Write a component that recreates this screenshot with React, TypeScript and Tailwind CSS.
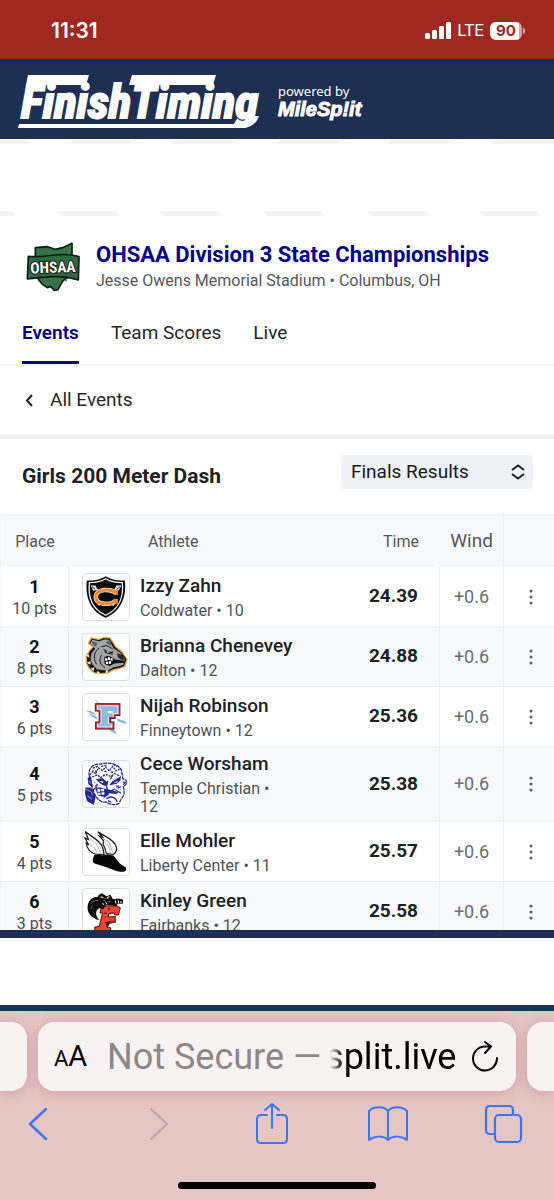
import type { ReactNode } from "react";

type Result = {
  place: number;
  points: number;
  name: string;
  school: string;
  grade: number;
  time: string;
  wind: string;
  logo: ReactNode;
};

function ColdwaterLogo() {
  return (
    <svg viewBox="0 0 144 144" className="w-full h-full" aria-hidden="true">
      <path d="M71 7C57 17 34 21 12 20C7 62 16 113 71 137C126 113 136 62 131 20C108 21 85 17 71 7Z" fill="#0b0b0b" />
      <path d="M71 15C56 24 38 27 20 27C16 64 24 108 71 129C118 108 127 64 123 27C104 27 86 24 71 15Z" fill="none" stroke="#fff" strokeWidth="4" />
      <path d="M30 38L50 54M112 38L94 54M48 98L58 92M96 98L86 92" stroke="#e8edf5" strokeWidth="5" />
      <path d="M24 36L40 36L45 50L32 52Z M120 36L104 36L99 50L112 52Z" fill="#dfe6f2" />
      <path d="M28 40l10 7M116 40l-10 7" stroke="#27344f" strokeWidth="3" />
      <path d="M104 61C88 44 40 46 40 72C40 98 88 99 104 82" fill="none" stroke="#fff" strokeWidth="14" />
      <path d="M104 61C88 44 40 46 40 72C40 98 88 99 104 82" fill="none" stroke="#ee8a35" strokeWidth="10" />
      <path d="M102 48H109V66H100L96 60ZM100 78H109V95H102L96 84Z" fill="#ee8a35" />
    </svg>
  );
}

function DaltonLogo() {
  return (
    <svg viewBox="0 0 144 144" className="w-full h-full" aria-hidden="true">
      <path d="M17 29L26 12L49 17L66 11L84 12L91 22L102 40L122 56L138 80L130 102L114 108L94 112L80 121L55 124L36 122L20 108L11 92L10 70L22 50L31 41Z" fill="#171719" stroke="#efa13b" strokeWidth="4" strokeLinejoin="round" />
      <path d="M22 29L30 18L50 23L68 17L82 18L88 30L96 45L117 59L131 78L126 96L112 101L95 104L76 116L50 117L32 104L23 84L26 62L38 45Z" fill="#a3a4a6" />
      <path d="M26 23L45 27L41 40L32 35ZM76 20L88 23L87 37L73 29Z" fill="#5e5f62" />
      <path d="M50 44C32 57 32 80 42 94M58 66C48 82 54 98 68 105M58 40L74 36L92 46M68 56L92 64" fill="none" stroke="#18191b" strokeWidth="3" strokeLinecap="round" />
      <path d="M62 46L84 56L96 54L92 61L76 61Z" fill="#18191b" />
      <path d="M72 52L84 58L77 59Z" fill="#fff" />
      <path d="M106 60L127 66L135 78L122 82L110 74Z" fill="#26272a" />
      <path d="M66 74C76 64 90 70 100 80L130 84L128 90L98 92L84 100L68 94Z" fill="#121214" />
      <path d="M69 76h7v8h-7zm9-3h7v8h-7zm9 3h6v8h-6zM72 87h7v7h-7zm9-2h7v8h-7z" fill="#fff" />
      <path d="M14 68L26 96L42 114L72 118" fill="none" stroke="#151517" strokeWidth="7" />
      <path d="M8 67l10-3 2 10zM12 90l11-5 1 11zM24 109l11-5-1 11zM42 125l5-10 7 9zM70 122l3-9 8 7z" fill="#fff" stroke="#d58829" strokeWidth="1" />
    </svg>
  );
}

function FinneytownLogo() {
  return (
    <svg viewBox="0 0 144 144" className="w-full h-full" aria-hidden="true">
      <path d="M34 17L57 33L74 38L58 41ZM7 50L28 55L43 65L26 62ZM17 60L40 69L48 81L31 73ZM104 76L132 85L136 94L110 86ZM76 106L97 110L106 127L86 116Z" fill="#86b5d8" />
      <path d="M37 29H117V69H102V78H88V86H98V111H38V86H49V55H37Z" fill="#251318" />
      <path d="M41 33H113V65H98V74H83V90H94V107H42V90H53V51H41Z" fill="#fff" stroke="#b92f42" strokeWidth="4" />
      <path d="M46 38H108V60H94V53H78V60H93V72H78V94H89V102H47V94H58V46H46Z" fill="#8bbbe0" />
    </svg>
  );
}

function TempleLogo() {
  return (
    <svg viewBox="0 0 144 144" className="w-full h-full" aria-hidden="true">
      <path d="M20 48C15 24 30 8 55 10C80 1 111 10 120 28L125 56C140 59 141 72 126 80C132 98 128 111 119 119L113 132C102 140 83 137 72 128C56 132 45 119 38 107L28 82Z" fill="#fff" stroke="#252a8f" strokeWidth="4" strokeDasharray="12 2" />
      <path d="M8 82L26 84L40 111L34 138L12 125L6 101ZM14 53L25 48L31 84L17 73Z" fill="#252a8f" />
      <path d="M10 90L24 96L30 107M14 109L28 119M19 62L25 70" stroke="#fff" strokeWidth="2" />
      <path d="M22 44L31 31L39 41L48 21L61 30L71 19L82 31L93 17L103 31L115 25M31 23L49 15M57 17L75 13M29 50L45 43L54 52L71 42L87 48L99 40L116 47M96 11L107 18M38 30L44 35M67 32L77 34M87 34L97 36" fill="none" stroke="#252a8f" strokeWidth="4" strokeDasharray="7 3" />
      <path d="M40 57L61 53L79 69L70 79L56 72ZM119 47L91 64L82 76L104 72L117 61Z" fill="#252a8f" />
      <path d="M51 62L65 65L61 70ZM96 67L110 62L105 68Z" fill="#fff" />
      <path d="M78 62C72 76 72 91 86 95L100 87M45 80L31 91M47 73L38 79M104 78L117 84M101 90L119 101M92 46L86 57M124 65l8 2-6 7M73 118C86 108 104 113 107 129M65 114L81 103M78 124l11 5" fill="none" stroke="#252a8f" strokeWidth="4" />
      <path d="M39 88C55 75 70 91 89 91L111 98L104 103L81 101L68 113L47 108Z" fill="#252a8f" />
      <path d="M45 88h9v8h-9zm12-1h9v8h-9zm-11 12h9v7h-9zm12-1h9v8h-9z" fill="#fff" />
      <path d="M105 84l16 8M110 77l11 4M35 66l9 7M63 43l9 8M30 73l6 6" stroke="#252a8f" strokeWidth="3" strokeDasharray="3 3" />
    </svg>
  );
}

function LibertyLogo() {
  return (
    <svg viewBox="0 0 144 144" className="w-full h-full" aria-hidden="true">
      <path d="M35 82C50 79 63 85 75 79L96 84L116 109L132 119C140 126 133 135 124 134C102 134 89 124 71 119L34 107C28 99 32 90 35 82Z" fill="#070707" />
      <path d="M47 9C67 23 94 31 102 51C109 63 104 75 94 80L73 76C71 65 68 57 63 49L64 36L51 22L61 25Z" fill="#fff" stroke="#222" strokeWidth="4" />
      <path d="M7 8C31 28 58 37 63 64L66 80L39 79C26 77 11 61 10 44L18 50L6 28L17 33Z" fill="#fff" stroke="#222" strokeWidth="4" />
      <path d="M19 28L43 47L55 75M18 46L36 59L45 77M60 28L82 43L95 77M65 39L80 54L89 79" fill="none" stroke="#8a8a8a" strokeWidth="2" />
    </svg>
  );
}

function FairbanksLogo() {
  return (
    <svg viewBox="0 0 144 144" className="w-full h-full" aria-hidden="true">
      <path d="M56 63L66 53H107L117 59L111 81H99L98 75L81 77L79 88L101 86V104L79 102L75 119L86 121V138H37V119L51 117L61 75H53Z" fill="#ec4431" stroke="#35100e" strokeWidth="3" />
      <path d="M47 24C20 24 10 48 16 70C20 84 36 94 51 98C38 82 38 68 50 60L63 63L72 50L105 53L109 45L124 47L126 34L110 30L94 32L86 18L74 23L59 13L49 19Z" fill="#0b0b0c" />
      <path d="M24 47C30 38 38 36 47 36M24 62L30 52M59 23L69 31L81 29M63 36l9 2M79 38l9 2" fill="none" stroke="#8b8d92" strokeWidth="2" />
      <path d="M55 24l8 4M75 27l8-3M61 44l5 6M71 42l4 6M101 36l2 9M110 35l2 9M119 37v8" stroke="#fff" strokeWidth="3" />
      <path d="M69 103L104 105L84 109L76 121Z" fill="#3b1412" />
      <path d="M67 76h7M83 59l-3 6" stroke="#171717" strokeWidth="4" />
    </svg>
  );
}

function OhsaaLogo() {
  return (
    <svg viewBox="0 0 162 150" className="w-[54px] h-[50px] shrink-0" role="img" aria-label="OHSAA">
      <path d="M28 17L65 14L87 22L110 17L138 4V61L128 105L112 115L104 128L96 143L85 145L74 133L64 137L49 127L39 115L28 90Z" fill="#387249" stroke="#111b16" strokeWidth="5" strokeLinejoin="round" />
      <path d="M7 43C50 50 106 27 159 44L157 114C109 98 56 104 4 111Z" fill="#2f6944" stroke="#111b16" strokeWidth="5" strokeLinejoin="round" />
      <text x="81" y="92" textAnchor="middle" transform="rotate(-2 80 78)" fill="#fff" stroke="#111b16" strokeWidth="6" paintOrder="stroke" className="font-['Roboto_Condensed',Roboto,sans-serif] text-[46px] font-bold">
        OHSAA
      </text>
      <path d="M116 116h7" stroke="#555" strokeWidth="3" />
    </svg>
  );
}

function FinishTimingLogo() {
  return (
    <svg viewBox="0 0 250 60" className="w-[250px] h-[60px] shrink-0" role="img" aria-label="FinishTiming">
      <text x="7" y="49" fill="#fff" stroke="#fff" strokeWidth="2" className="font-['Roboto_Condensed',Roboto,sans-serif] text-[47px] font-bold italic">
        FinishTiming
      </text>
      <path d="M14 6H75L72 16H12ZM118 6H202L199 16H115Z" fill="#fff" />
      <path d="M5 55H225Q236 55 239 47H245Q241 59 228 59H4Z" fill="#fff" />
    </svg>
  );
}

const results: Result[] = [
  { place: 1, points: 10, name: "Izzy Zahn", school: "Coldwater", grade: 10, time: "24.39", wind: "+0.6", logo: <ColdwaterLogo /> },
  { place: 2, points: 8, name: "Brianna Chenevey", school: "Dalton", grade: 12, time: "24.88", wind: "+0.6", logo: <DaltonLogo /> },
  { place: 3, points: 6, name: "Nijah Robinson", school: "Finneytown", grade: 12, time: "25.36", wind: "+0.6", logo: <FinneytownLogo /> },
  { place: 4, points: 5, name: "Cece Worsham", school: "Temple Christian", grade: 12, time: "25.38", wind: "+0.6", logo: <TempleLogo /> },
  { place: 5, points: 4, name: "Elle Mohler", school: "Liberty Center", grade: 11, time: "25.57", wind: "+0.6", logo: <LibertyLogo /> },
  { place: 6, points: 3, name: "Kinley Green", school: "Fairbanks", grade: 12, time: "25.58", wind: "+0.6", logo: <FairbanksLogo /> },
];

function StatusBar() {
  return (
    <div className="h-[59px] shrink-0 bg-[#9f2820] text-white flex items-center justify-between pl-[51px] pr-[29px] pt-[2px]">
      <span className="font-[Inter,sans-serif] text-[21px] font-semibold">11:31</span>
      <div className="flex items-center gap-[6px]">
        <svg viewBox="0 0 26 17" className="w-[26px] h-[17px]" fill="#fff" aria-hidden="true">
          <rect x="0" y="11" width="5" height="6" rx="1.5" />
          <rect x="7" y="8" width="5" height="9" rx="1.5" />
          <rect x="14" y="4" width="5" height="13" rx="1.5" />
          <rect x="21" y="0" width="5" height="17" rx="1.5" />
        </svg>
        <span className="text-[17px]">LTE</span>
        <div className="flex items-center">
          <span className="w-8 h-[18px] rounded-[6px] bg-linear-to-r from-white from-90% to-[#d9a5a1] to-90% text-[#9f2820] font-[Inter,sans-serif] text-[15px] leading-[18px] font-bold text-center">
            90
          </span>
          <span className="w-[2px] h-[6px] ml-px rounded-r bg-[#d9a5a1]" />
        </div>
      </div>
    </div>
  );
}

function SiteHeader() {
  return (
    <header className="h-20 shrink-0 bg-[#1d2f52] flex items-center gap-3 pl-[14px]">
      <FinishTimingLogo />
      <div className="flex flex-col text-white pt-1">
        <span className="font-['Noto_Sans',sans-serif] text-[13px] leading-4 pl-[2px]">powered by</span>
        <span className="font-['Liberation_Sans',sans-serif] text-xl leading-5 font-bold italic [-webkit-text-stroke:1px_white] pl-[2px]">MileSp!it</span>
      </div>
    </header>
  );
}

/* Edges of the banner slot */
function AdSlot() {
  return (
    <div className="h-[78px] shrink-0 flex flex-col justify-between pt-[2px]">
      <svg viewBox="0 0 554 4" preserveAspectRatio="none" className="w-full h-1" fill="#f4f4f4" aria-hidden="true">
        <path d="M0 0H30L27 3H0ZM69 0H133L130 3H73ZM171 0H235L232 3H175ZM277 0H341L338 3H277ZM387 0H451L448 3H391ZM491 0H554V3H495Z" />
      </svg>
      <svg viewBox="0 0 554 6" preserveAspectRatio="none" className="w-full h-[6px]" fill="#f4f4f4" aria-hidden="true">
        <path d="M0 0H12L16 5H0ZM57 0H115L120 5H61ZM160 0H218L223 5H164ZM263 0H321L326 5H267ZM368 0H426L431 5H372ZM480 0H537L542 5H484Z" />
      </svg>
    </div>
  );
}

function MeetHeader() {
  return (
    <section className="shrink-0">
      <div className="flex items-center gap-4 pl-[26px] pt-6 pr-4">
        <OhsaaLogo />
        <div>
          <h1>
            <a href="#meet" className="text-[22px] leading-7 font-bold text-[#000090]">OHSAA Division 3 State Championships</a>
          </h1>
          <p className="text-base leading-6 text-[#55565d]">Jesse Owens Memorial Stadium • Columbus, OH</p>
        </div>
      </div>
      <nav className="mt-3 flex gap-8 px-[22px] text-[19px] leading-6 text-[#25262a] border-b-2 border-[#f5f5f6]">
        <a href="#events" className="pt-4 pb-4 border-b-3 border-[#000090] text-[#000090] font-semibold">Events</a>
        <a href="#scores" className="pt-4">Team Scores</a>
        <a href="#live" className="pt-4">Live</a>
      </nav>
      <a href="#all" className="h-[68px] flex items-center gap-4 pl-6 text-[19px] text-[#25262a]">
        <svg viewBox="0 0 10 14" className="w-[10px] h-[14px]" fill="none" stroke="#222" strokeWidth="2" aria-hidden="true">
          <path d="M8 2L3 7.500L8 13" />
        </svg>
        All Events
      </a>
    </section>
  );
}

function EventTitle() {
  return (
    <section className="shrink-0 h-20 border-t-5 border-[#f3f3f3] flex items-center justify-between pl-[22px] pr-[21px]">
      <h2 className="text-[21px] font-bold text-[#202124]">Girls 200 Meter Dash</h2>
      <div className="relative w-[192px] mb-[10px]">
        <select aria-label="Results round" className="appearance-none block w-full h-[34px] rounded bg-[#f0f0f7] pl-[10px] text-[19px] leading-6 text-[#17181b]">
          <option>Finals Results</option>
        </select>
        <svg viewBox="0 0 14 16" className="absolute right-2 top-[9px] w-[14px] h-4 pointer-events-none" fill="none" stroke="#222" strokeWidth="2" aria-hidden="true">
          <path d="M1 6L7 1.500L13 6M1 10L7 14.500L13 10" />
        </svg>
      </div>
    </section>
  );
}

function ResultsTable() {
  return (
    <div className="flex-1 min-h-0 overflow-hidden">
      <table className="w-full table-fixed border-separate border-spacing-0 text-center border-l border-[#f5f5f6]">
        <colgroup>
          <col className="w-[68px]" />
          <col />
          <col className="w-[90px]" />
          <col className="w-[64px]" />
          <col className="w-[50px]" />
        </colgroup>
        <thead>
          <tr className="h-[53px] bg-[#f8f9fb] text-base text-[#55565b]">
            <th className="font-normal border-t-2 border-[#f1f2f4]">Place</th>
            <th className="font-normal text-left pl-[79px] border-t-2 border-[#f1f2f4]">Athlete</th>
            <th className="font-normal text-right pr-[21px] border-t-2 border-[#f1f2f4]">Time</th>
            <th className="font-normal text-[19px] border-t-2 border-r border-[#f1f2f4]">Wind</th>
            <th className="border-t-2 border-[#f1f2f4]" aria-label="Actions" />
          </tr>
        </thead>
        <tbody>
          {results.map((r) => (
            <tr key={r.place} className="h-[60px] even:bg-[#f7f9fb]">
              <td className="border-b border-r border-[#eff0f2]">
                <div className="text-lg leading-6 font-bold text-[#111215]">{r.place}</div>
                <div className="text-base leading-5 text-[#4d4e54]">{r.points} pts</div>
              </td>
              <td className="border-b border-[#eff0f2] py-[5px] pl-[13px] pr-3 text-left">
                <div className="flex items-center gap-[10px]">
                  <div className="w-12 h-12 shrink-0 rounded-[4px] border border-[#dedfe2] bg-white overflow-hidden">
                    {r.logo}
                  </div>
                  <div>
                    <a href="#athlete" className="block text-[19px] leading-6 font-medium text-[#202124]">{r.name}</a>
                    <p className="mt-1 max-w-[140px] text-base leading-[18px] text-[#505158]">{r.school} • {r.grade}</p>
                  </div>
                </div>
              </td>
              <td className="border-b border-r border-[#eff0f2] pr-[21px] text-right text-[19px] font-bold text-[#202124]">{r.time}</td>
              <td className="border-b border-r border-[#eff0f2] text-lg text-[#6b6c70]">{r.wind}</td>
              <td className="border-b border-[#eff0f2] pl-1">
                <button type="button" aria-label={`More for ${r.name}`} className="p-2 align-middle">
                  <svg viewBox="0 0 4 16" className="w-1 h-4" fill="#5d5e62">
                    <circle cx="2" cy="2" r="1.5" />
                    <circle cx="2" cy="8" r="1.5" />
                    <circle cx="2" cy="14" r="1.5" />
                  </svg>
                </button>
              </td>
            </tr>
          ))}
        </tbody>
      </table>
    </div>
  );
}

function BrowserBar() {
  return (
    <footer className="h-[189px] shrink-0 flex flex-col bg-[#e6c5c5] pt-[11px]">
      <div className="flex gap-[11px] h-[69px]">
        <div className="w-[27px] rounded-r-2xl bg-[#f9f2f3] shadow-[0_2px_14px_rgba(140,60,60,0.25)]" />
        <div className="flex-1 min-w-0 rounded-2xl bg-[#f9f2f3] shadow-[0_2px_14px_rgba(140,60,60,0.25)] flex items-center pl-4 pr-[18px] text-black">
          <button type="button" aria-label="Page settings" className="w-[33px] shrink-0 flex items-baseline">
            <span className="text-[22px]">A</span>
            <span className="text-[29px]">A</span>
          </button>
          <button type="button" className="flex-1 min-w-0 pl-5 flex text-4xl leading-[48px] whitespace-nowrap">
            <span className="text-[#8c8789]">Not Secure —</span>
            <span className="ml-1 [mask-image:linear-gradient(to_right,transparent_5px,black_18px)]">split.live</span>
          </button>
          <button type="button" aria-label="Reload" className="shrink-0">
            <svg viewBox="0 0 26 32" className="w-[26px] h-8" fill="none" stroke="#000" strokeWidth="2" strokeLinecap="round" strokeLinejoin="round">
              <path d="M25 17A12 12 0 1 1 13 5.500H19M13 1L19 5.500L13 12" />
            </svg>
          </button>
        </div>
        <div className="w-[27px] rounded-l-2xl bg-[#f9f2f3] shadow-[0_2px_14px_rgba(140,60,60,0.25)]" />
      </div>
      <div className="mt-3 flex justify-between pl-[18px] pr-[30px] text-[#3c78ec]">
        <button type="button" aria-label="Back">
          <svg viewBox="0 0 40 42" className="w-10 h-[42px]" fill="none" stroke="currentColor" strokeWidth="2.5" strokeLinecap="round" strokeLinejoin="round">
            <path d="M28 6L12 21L28 36" />
          </svg>
        </button>
        <button type="button" aria-label="Forward" disabled className="text-[#b9a4a6]">
          <svg viewBox="0 0 40 42" className="w-10 h-[42px]" fill="none" stroke="currentColor" strokeWidth="2" strokeLinecap="round" strokeLinejoin="round">
            <path d="M16 6L32 21L16 36" />
          </svg>
        </button>
        <button type="button" aria-label="Share">
          <svg viewBox="0 0 40 42" className="w-10 h-[42px]" fill="none" stroke="currentColor" strokeWidth="2" strokeLinecap="round" strokeLinejoin="round">
            <path d="M16 12H10Q6 12 6 16V36Q6 40 10 40H32Q36 40 36 36V16Q36 12 32 12H26M21 25V1M14 7L21 1L28 7" />
          </svg>
        </button>
        <button type="button" aria-label="Bookmarks">
          <svg viewBox="0 0 40 42" className="w-10 h-[42px]" fill="none" stroke="currentColor" strokeWidth="2" strokeLinecap="round" strokeLinejoin="round">
            <path d="M20 8C16 3 6 3 1 8V37C6 33 15 32 20 37C25 32 34 33 39 37V8C34 3 24 3 20 8ZM20 8V37" />
          </svg>
        </button>
        <button type="button" aria-label="Tabs">
          <svg viewBox="0 0 40 42" className="w-10 h-[42px]" fill="none" stroke="currentColor" strokeWidth="2.200" strokeLinejoin="round">
            <rect x="11" y="12" width="26" height="27" rx="4" />
            <path d="M11 31H6Q2 31 2 27V7Q2 3 6 3H25Q29 3 29 7V12" />
          </svg>
        </button>
      </div>
      <div className="mt-auto mb-[11px] mx-auto w-[198px] h-[7px] rounded-full bg-black" />
    </footer>
  );
}

export default function App() {
  return (
    <div className="h-screen flex flex-col bg-white font-[Roboto,sans-serif]">
      <StatusBar />
      <SiteHeader />
      <AdSlot />
      <MeetHeader />
      <EventTitle />
      <ResultsTable />
      {/* Sticky banner */}
      <div className="h-[81px] shrink-0 border-t-8 border-b-6 border-[#1d2f52] bg-white" />
      <BrowserBar />
    </div>
  );
}
